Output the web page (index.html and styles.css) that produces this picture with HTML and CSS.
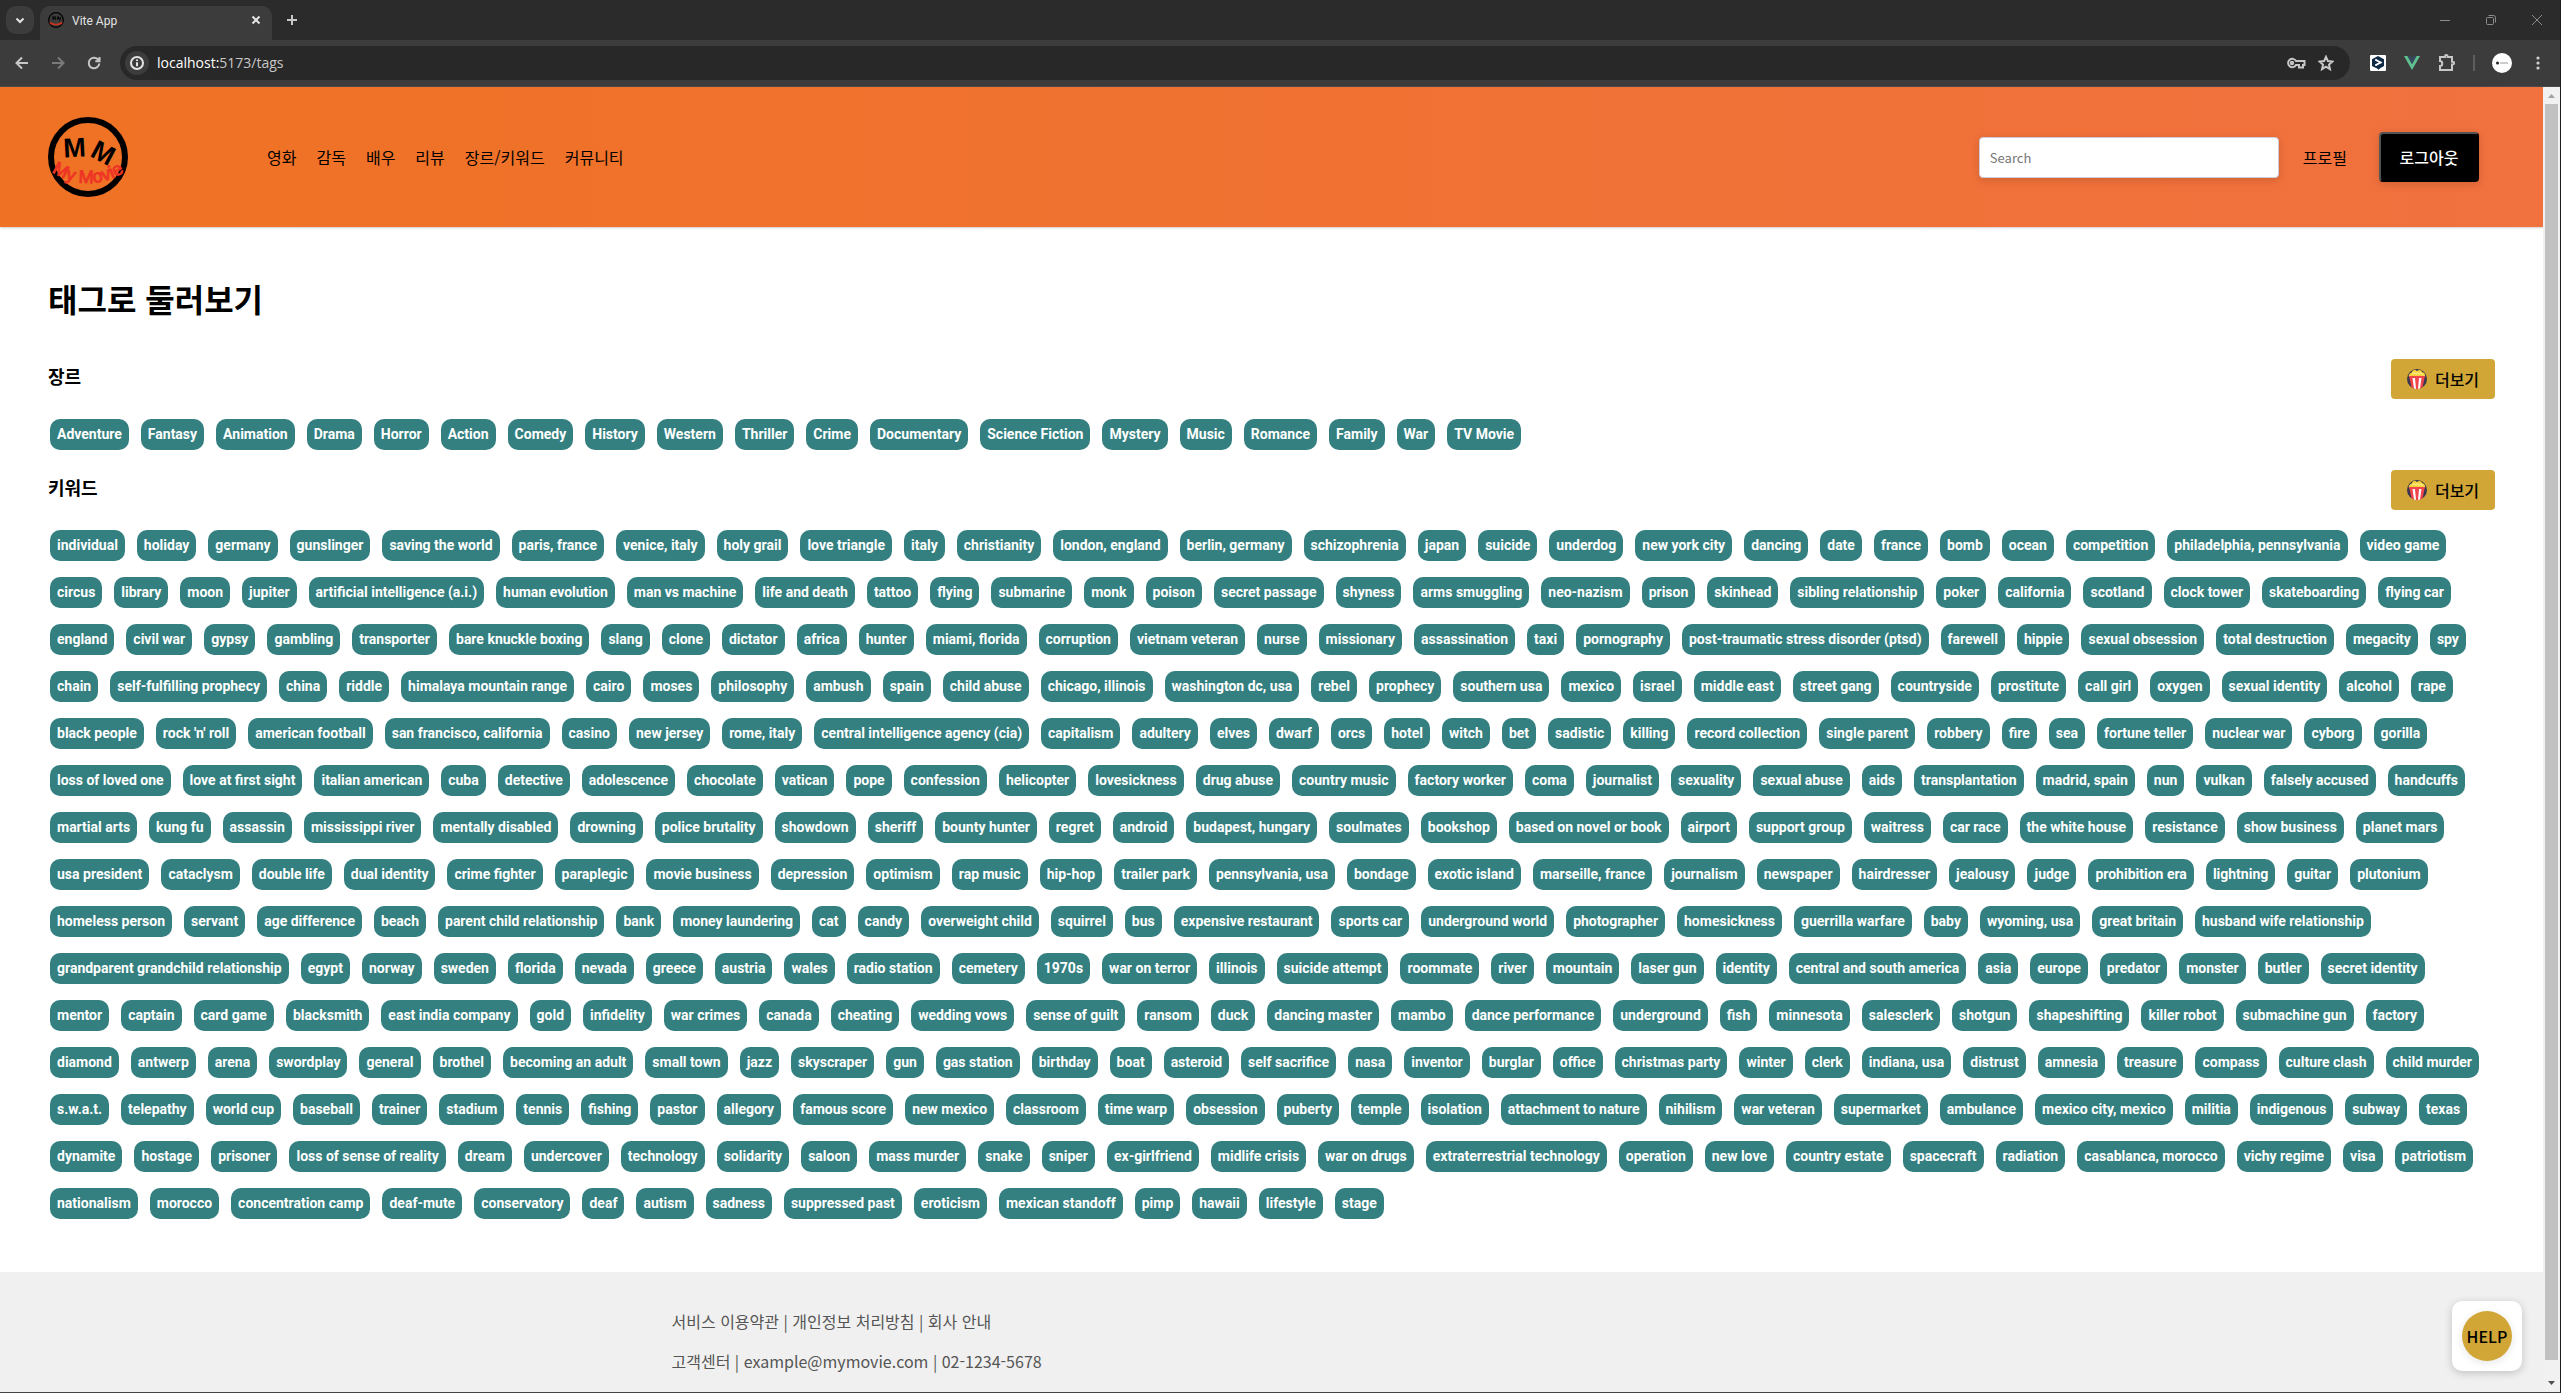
FILE: index.html
```html
<!DOCTYPE html>
<html lang="ko">
<head>
  <meta charset="utf-8">
  <title>Vite App</title>
  <link rel="stylesheet" href="styles.css">
</head>
<body>
  <div class="window">
    <div class="tab-strip">
      <button class="tab-menu" aria-label="Search tabs"><svg width="12" height="12" viewBox="0 0 12 12"><path d="M2.500 4.500L6 8l3.500-3.500"/></svg></button>
      <div class="tab">
        <svg class="favicon" width="16" height="16" viewBox="0 0 16 16">
          <circle cx="8" cy="8" r="7.300" fill="none" stroke="#000" stroke-width="1.300"/>
          <path d="M5 8V4.500l1 2 1.200-2V8M9 7.500l1.200-3 .500 2.500 1.800-1.500L11.500 9" fill="none" stroke="#000"/>
          <path d="M1.500 9.500q6.500 4.500 13 0l-.500 2.500q-6 2.500-12 0z" fill="#d3301f"/>
        </svg>
        <span class="tab-title">Vite App</span>
        <button class="icon-button" aria-label="Close tab"><svg width="10" height="10" viewBox="0 0 10 10"><path d="M1.500 1.500l7 7M8.500 1.500l-7 7"/></svg></button>
      </div>
      <button class="icon-button new-tab" aria-label="New tab"><svg width="12" height="12" viewBox="0 0 12 12"><path d="M6 1v10M1 6h10"/></svg></button>
      <div class="window-controls">
        <button class="icon-button" aria-label="Minimize"><svg width="12" height="12" viewBox="0 0 12 12"><path d="M1 6.500h10"/></svg></button>
        <button class="icon-button" aria-label="Restore"><svg width="12" height="12" viewBox="0 0 12 12"><rect x="1.500" y="3.500" width="7" height="7" rx="1"/><path d="M3.500 1.500h5a2 2 0 0 1 2 2v5"/></svg></button>
        <button class="icon-button" aria-label="Close"><svg width="12" height="12" viewBox="0 0 12 12"><path d="M1 1l10 10M11 1L1 11"/></svg></button>
      </div>
    </div>

    <div class="toolbar">
      <div class="toolbar-nav">
        <button class="icon-button" aria-label="Back"><svg width="16" height="16" viewBox="0 0 16 16"><path d="M14 8H3M8 2.500L2.500 8 8 13.500"/></svg></button>
        <button class="icon-button dim" aria-label="Forward"><svg width="16" height="16" viewBox="0 0 16 16"><path d="M2 8h11M8 2.500L13.500 8 8 13.500"/></svg></button>
        <button class="icon-button" aria-label="Reload"><svg width="16" height="16" viewBox="0 0 16 16"><path d="M13.300 8.500A5.300 5.300 0 1 1 11.800 4.300L13.500 6M13.500 2v4.200H9.300"/></svg></button>
      </div>
      <div class="address">
        <button class="icon-button site-info" aria-label="Site information"><svg width="16" height="16" viewBox="0 0 16 16"><circle cx="8" cy="8" r="6"/><path d="M8 7.200v4M8 4.500v1.500"/></svg></button>
        <span class="url"><span class="host">localhost:</span>5173/tags</span>
        <button class="icon-button" aria-label="Passwords"><svg width="20" height="16" viewBox="0 0 20 16"><path d="M10 6a4.200 4.200 0 1 0 0 4h3v2.500h4V10h1.500V6z"/><circle cx="6" cy="8" r="1.200"/></svg></button>
        <button class="icon-button" aria-label="Bookmark"><svg width="16" height="16" viewBox="0 0 16 16"><path d="M8 1.800l1.900 4.300 4.600.400-3.500 3.100 1 4.600-4-2.500-4 2.500 1-4.600L1.500 6.500l4.600-.400z"/></svg></button>
      </div>
      <div class="extensions">
        <button class="icon-button" aria-label="Translate"><svg width="16" height="16" viewBox="0 0 16 16"><rect class="solid" width="16" height="16" rx="1" fill="#fff"/><path class="solid" d="M8 1l6 3.200v6.800l-3.500 2L8 15v-1L2 11V4.200z" fill="#0f2b46"/><path d="M6 5l4.500 2.500L6 10" stroke="#fff"/><g class="solid" fill="#fff"><circle cx="6" cy="5" r="1"/><circle cx="10.500" cy="7.500" r="1"/><circle cx="6" cy="10" r="1"/></g></svg></button>
        <button class="icon-button" aria-label="Vue"><svg width="16" height="16" viewBox="0 0 16 16"><path class="solid" d="M0 1h3.500L8 9l4.500-8H16L8 15z" fill="#5fbf8f"/><path class="solid" d="M3.500 1h3L8 3.500 9.500 1h3L8 9z" fill="#35495e"/></svg></button>
        <button class="icon-button" aria-label="Extensions"><svg width="18" height="18" viewBox="0 0 18 18"><path d="M2 3h5v-.700a1.300 1.300 0 0 1 2.600 0V3H14v4.800h.800a1.300 1.300 0 0 1 0 2.600H14V16H2v-4c3 0 3-5 0-5z"/></svg></button>
        <span class="divider"></span>
        <button class="icon-button" aria-label="Profile"><svg width="20" height="20" viewBox="0 0 20 20"><circle class="solid" cx="10" cy="10" r="10" fill="#fff"/><circle class="solid" cx="5.500" cy="10" r="1.500" fill="#222"/><path class="thin" d="M8 10h8" stroke="#999"/></svg></button>
        <button class="icon-button" aria-label="Menu"><svg width="16" height="16" viewBox="0 0 16 16"><g class="solid" fill="#d0d0d0"><circle cx="8" cy="3" r="1.600"/><circle cx="8" cy="8" r="1.600"/><circle cx="8" cy="13" r="1.600"/></g></svg></button>
      </div>
    </div>

    <div class="viewport">
      <div class="page">
        <header class="site-header">
          <a class="logo" href="#" aria-label="My Movie">
            <svg width="80" height="80" viewBox="0 0 80 80">
              <circle cx="40" cy="40" r="37" fill="none" stroke="#000" stroke-width="6"/>
              <text class="logo-letter" transform="translate(27 40) rotate(-3)">M</text>
              <text class="logo-letter" transform="translate(51 44) rotate(28)">M</text>
              <path id="logo-arc" d="M0 52A64 64 0 0 0 80 52" fill="none"/>
              <text class="logo-name"><textPath href="#logo-arc" startOffset="50%">My Movie</textPath></text>
            </svg>
          </a>
          <nav class="site-nav">
            <a href="#">영화</a>
            <a href="#">감독</a>
            <a href="#">배우</a>
            <a href="#">리뷰</a>
            <a href="#">장르/키워드</a>
            <a href="#">커뮤니티</a>
          </nav>
          <input class="search" type="search" placeholder="Search" aria-label="Search">
          <a class="profile" href="#">프로필</a>
          <button class="logout">로그아웃</button>
        </header>

        <main class="content">
          <h1>태그로 둘러보기</h1>
          <section>
            <div class="section-head">
              <h2>장르</h2>
              <button class="more">
                <svg width="20" height="20" viewBox="0 0 20 20">
                  <circle cx="10" cy="10" r="10" fill="#35364f"/>
                  <path d="M2 8C1 5 4 4 5 3c1-3 4-2 5-1 2-2 5-1 5 1 2 0 4 3 3 5z" fill="#f6d13b"/>
                  <path d="M5 5q2-2 4 0 2-2 3 0 2-2 4 1" fill="none" stroke="#fdea7a" stroke-width="1.500"/>
                  <path d="M2 7h16l-2.500 11.300a10 10 0 0 1-11 0z" fill="#f0454b"/>
                  <path d="M5.500 9H8l1 11-2-.500zM12 9h2.500L13 19.500l-2 .500z" fill="#fff"/>
                </svg>
                더보기
              </button>
            </div>
            <ul class="tags" id="genres"></ul>
          </section>
          <section>
            <div class="section-head">
              <h2>키워드</h2>
              <button class="more">
                <svg width="20" height="20" viewBox="0 0 20 20">
                  <circle cx="10" cy="10" r="10" fill="#35364f"/>
                  <path d="M2 8C1 5 4 4 5 3c1-3 4-2 5-1 2-2 5-1 5 1 2 0 4 3 3 5z" fill="#f6d13b"/>
                  <path d="M5 5q2-2 4 0 2-2 3 0 2-2 4 1" fill="none" stroke="#fdea7a" stroke-width="1.500"/>
                  <path d="M2 7h16l-2.500 11.300a10 10 0 0 1-11 0z" fill="#f0454b"/>
                  <path d="M5.500 9H8l1 11-2-.500zM12 9h2.500L13 19.500l-2 .500z" fill="#fff"/>
                </svg>
                더보기
              </button>
            </div>
            <ul class="tags" id="keywords"></ul>
          </section>
        </main>

        <footer class="site-footer">
          <div class="footer-inner">
            <p>서비스 이용약관 | 개인정보 처리방침 | 회사 안내</p>
            <p>고객센터 | example@mymovie.com | 02-1234-5678</p>
          </div>
        </footer>

        <div class="help"><button>HELP</button></div>
      </div>
      <div class="scrollbar" aria-hidden="true">
        <svg class="arrow" width="17" height="17"><path d="M5 11h7L8.500 7z" fill="#a3a3a3"/></svg>
        <div class="thumb"></div>
        <svg class="arrow" width="17" height="17"><path d="M5 6h7L8.500 10z" fill="#505050"/></svg>
      </div>
    </div>
  </div>
  <script src="tags.js"></script>
</body>
</html>
```
FILE: styles.css
```css
* {
  box-sizing: border-box;
}

body {
  margin: 0;
  background: #fff;
  color: #000;
  font: 16px/24px "Noto Sans CJK KR", sans-serif;
}

button,
input {
  font: inherit;
}

button {
  padding: 0;
  border: 0;
  background: none;
  color: inherit;
}

a {
  color: inherit;
  text-decoration: none;
}

/* Browser frame */
.window {
  display: flex;
  flex-direction: column;
  height: 100vh;
  overflow: hidden;
  background: #3c3c3c;
  border-right: 1px solid #1c1c1c;
  border-bottom: 1px solid #444;
}

.tab-strip {
  display: flex;
  align-items: center;
  flex: none;
  height: 40px;
  padding: 0 6px;
  background: #2b2b2b;
  color: #e3e3e3;
}

.tab-strip svg,
.toolbar svg {
  display: block;
  fill: none;
  stroke: currentColor;
  stroke-width: 2px;
}

.tab-strip svg.favicon {
  stroke: none;
  stroke-width: 1px;
}

.toolbar svg .solid {
  stroke: none;
}

.toolbar svg .thin {
  stroke-width: 1px;
}

.icon-button,
.tab-menu {
  display: grid;
  place-items: center;
}

.tab-menu {
  width: 28px;
  height: 28px;
  border-radius: 10px;
  background: #3c3c3c;
}

.tab {
  display: flex;
  align-items: center;
  align-self: flex-end;
  width: 232px;
  height: 34px;
  margin-left: 6px;
  padding: 0 11px 6px 8px;
  border-radius: 10px 10px 0 0;
  background: #3c3c3c;
  font: 12px/16px Roboto, sans-serif;
}

.tab-title {
  flex: 1;
  margin: 2px 0 0 8px;
}

.new-tab {
  margin-left: 14px;
  color: #c7c7c7;
}

.window-controls {
  display: flex;
  gap: 34px;
  margin-left: auto;
  margin-right: 11px;
  color: #8c8c8c;
}

.tab-strip .window-controls svg {
  stroke-width: 1px;
}

.toolbar {
  display: flex;
  align-items: center;
  flex: none;
  height: 47px;
  padding: 0 14px;
  border-bottom: 1px solid #4a4a4a;
  background: #3c3c3c;
  color: #c7c7c7;
}

.toolbar-nav {
  display: flex;
  gap: 20px;
}

.toolbar .dim {
  color: #7a7a7a;
}

.address {
  display: flex;
  align-items: center;
  flex: 1;
  gap: 12px;
  height: 34px;
  margin-left: 18px;
  padding: 0 16px 0 5px;
  border-radius: 17px;
  background: #282828;
}

.site-info {
  width: 24px;
  height: 24px;
  border-radius: 50%;
  background: #3c3c3c;
  color: #e3e3e3;
}

.url {
  flex: 1;
  margin-left: -4px;
  color: #c7c7c7;
  font: 14px/20px "Open Sans", sans-serif;
}

.host {
  color: #fff;
}

.toolbar .address svg,
.toolbar .extensions svg {
  stroke-width: 2px;
}

.extensions {
  display: flex;
  align-items: center;
  gap: 18px;
  margin-left: 20px;
}

.divider {
  width: 2px;
  height: 16px;
  margin: 0 -1px;
  background: #5e5e5e;
}

.viewport {
  display: flex;
  flex: 1;
  min-height: 0;
}

.page {
  position: relative;
  display: flex;
  flex: 1;
  flex-direction: column;
  min-width: 0;
  overflow: hidden;
  background: #fff;
}

.scrollbar {
  display: flex;
  flex-direction: column;
  align-items: center;
  width: 17px;
  background: #f1f1f1;
}

.arrow {
  flex: none;
}

.thumb {
  flex: 1;
  width: 13px;
  margin-bottom: 15px;
  background: #c1c1c1;
}

/* Site header */
.site-header {
  display: flex;
  align-items: center;
  flex: none;
  height: 140px;
  padding: 0 64px 0 48px;
  background: linear-gradient(90deg, #ef7224, #f1713f);
  box-shadow: 0 1px 2px rgba(0, 0, 0, 0.2);
}

.logo svg {
  display: block;
  overflow: visible;
}

.logo-letter {
  font: bold 27px "Liberation Sans Narrow", "Liberation Sans", sans-serif;
  text-anchor: middle;
}

.logo-name {
  font: 18px "Liberation Sans", sans-serif;
  text-anchor: middle;
  fill: #ee3524;
  stroke: #ee3524;
  stroke-width: 1px;
}

.site-nav {
  display: flex;
  flex: 1;
  gap: 20px;
  margin-left: 139px;
}

.search {
  width: 300px;
  height: 41px;
  padding: 0 10px;
  border: 1px solid #ccd;
  border-radius: 4px;
  background: #fff;
  box-shadow: 0 2px 8px rgba(0, 0, 0, 0.15);
  font-size: 13px;
}

.search::placeholder {
  color: #757575;
}

.profile {
  margin: 0 32px 0 24px;
}

.logout {
  width: 100px;
  height: 50px;
  border: 2px outset #000;
  border-radius: 4px;
  background: #000;
  box-shadow: 0 2px 8px rgba(0, 0, 0, 0.15);
  color: #fff;
  font-weight: 500;
}

/* Tags */
.content {
  padding: 46px 48px 33px;
}

h1,
h2 {
  margin: 0;
}

h1 {
  margin-bottom: 36px;
  font-size: 32px;
  line-height: 50px;
}

.section-head {
  display: flex;
  align-items: flex-start;
  justify-content: space-between;
}

h2 {
  font-size: 18px;
  line-height: 34px;
}

.more {
  display: flex;
  align-items: center;
  justify-content: center;
  gap: 8px;
  width: 104px;
  height: 40px;
  border-radius: 4px;
  background: #d1a636;
  font-weight: 500;
}

.tags {
  display: flex;
  flex-wrap: wrap;
  gap: 16px 12px;
  margin: 0;
  padding: 20px 0 20px 2px;
  list-style: none;
}

.tags a {
  display: block;
  padding: 0 7px;
  border-radius: 10px;
  background: #347f80;
  color: #fff;
  font: bold 14px/31px Roboto, sans-serif;
}

/* Footer */
.site-footer {
  flex: 1;
  padding: 37px 0 16px;
  background: #f0f0f0;
  color: #555;
}

.footer-inner {
  max-width: 1200px;
  margin: 0 auto;
}

.footer-inner p {
  margin: 0 0 16px;
}

.help {
  position: absolute;
  right: 21px;
  bottom: 21px;
  padding: 10px;
  border-radius: 10px;
  background: #fff;
  box-shadow: 0 2px 8px rgba(0, 0, 0, 0.2);
}

.help button {
  display: block;
  width: 50px;
  height: 50px;
  border-radius: 50%;
  background: #d1a636;
  box-shadow: 0 2px 8px rgba(0, 0, 0, 0.1);
  font-weight: 500;
}
```
FILE: tags.js
```js
const genres = `Adventure|Fantasy|Animation|Drama|Horror|Action|Comedy|History|Western|Thriller|Crime|Documentary|Science Fiction|Mystery|Music|Romance|Family|War|TV Movie`;

const keywords = [
  `individual|holiday|germany|gunslinger|saving the world|paris, france|venice, italy|holy grail|love triangle|italy|christianity|london, england|berlin, germany|schizophrenia|japan|suicide|underdog|new york city|dancing|date|france|bomb|ocean|competition|philadelphia, pennsylvania|video game`,
  `circus|library|moon|jupiter|artificial intelligence (a.i.)|human evolution|man vs machine|life and death|tattoo|flying|submarine|monk|poison|secret passage|shyness|arms smuggling|neo-nazism|prison|skinhead|sibling relationship|poker|california|scotland|clock tower|skateboarding|flying car`,
  `england|civil war|gypsy|gambling|transporter|bare knuckle boxing|slang|clone|dictator|africa|hunter|miami, florida|corruption|vietnam veteran|nurse|missionary|assassination|taxi|pornography|post-traumatic stress disorder (ptsd)|farewell|hippie|sexual obsession|total destruction|megacity|spy`,
  `chain|self-fulfilling prophecy|china|riddle|himalaya mountain range|cairo|moses|philosophy|ambush|spain|child abuse|chicago, illinois|washington dc, usa|rebel|prophecy|southern usa|mexico|israel|middle east|street gang|countryside|prostitute|call girl|oxygen|sexual identity|alcohol|rape`,
  `black people|rock 'n' roll|american football|san francisco, california|casino|new jersey|rome, italy|central intelligence agency (cia)|capitalism|adultery|elves|dwarf|orcs|hotel|witch|bet|sadistic|killing|record collection|single parent|robbery|fire|sea|fortune teller|nuclear war|cyborg|gorilla`,
  `loss of loved one|love at first sight|italian american|cuba|detective|adolescence|chocolate|vatican|pope|confession|helicopter|lovesickness|drug abuse|country music|factory worker|coma|journalist|sexuality|sexual abuse|aids|transplantation|madrid, spain|nun|vulkan|falsely accused|handcuffs`,
  `martial arts|kung fu|assassin|mississippi river|mentally disabled|drowning|police brutality|showdown|sheriff|bounty hunter|regret|android|budapest, hungary|soulmates|bookshop|based on novel or book|airport|support group|waitress|car race|the white house|resistance|show business|planet mars`,
  `usa president|cataclysm|double life|dual identity|crime fighter|paraplegic|movie business|depression|optimism|rap music|hip-hop|trailer park|pennsylvania, usa|bondage|exotic island|marseille, france|journalism|newspaper|hairdresser|jealousy|judge|prohibition era|lightning|guitar|plutonium`,
  `homeless person|servant|age difference|beach|parent child relationship|bank|money laundering|cat|candy|overweight child|squirrel|bus|expensive restaurant|sports car|underground world|photographer|homesickness|guerrilla warfare|baby|wyoming, usa|great britain|husband wife relationship`,
  `grandparent grandchild relationship|egypt|norway|sweden|florida|nevada|greece|austria|wales|radio station|cemetery|1970s|war on terror|illinois|suicide attempt|roommate|river|mountain|laser gun|identity|central and south america|asia|europe|predator|monster|butler|secret identity`,
  `mentor|captain|card game|blacksmith|east india company|gold|infidelity|war crimes|canada|cheating|wedding vows|sense of guilt|ransom|duck|dancing master|mambo|dance performance|underground|fish|minnesota|salesclerk|shotgun|shapeshifting|killer robot|submachine gun|factory`,
  `diamond|antwerp|arena|swordplay|general|brothel|becoming an adult|small town|jazz|skyscraper|gun|gas station|birthday|boat|asteroid|self sacrifice|nasa|inventor|burglar|office|christmas party|winter|clerk|indiana, usa|distrust|amnesia|treasure|compass|culture clash|child murder`,
  `s.w.a.t.|telepathy|world cup|baseball|trainer|stadium|tennis|fishing|pastor|allegory|famous score|new mexico|classroom|time warp|obsession|puberty|temple|isolation|attachment to nature|nihilism|war veteran|supermarket|ambulance|mexico city, mexico|militia|indigenous|subway|texas`,
  `dynamite|hostage|prisoner|loss of sense of reality|dream|undercover|technology|solidarity|saloon|mass murder|snake|sniper|ex-girlfriend|midlife crisis|war on drugs|extraterrestrial technology|operation|new love|country estate|spacecraft|radiation|casablanca, morocco|vichy regime|visa|patriotism`,
  `nationalism|morocco|concentration camp|deaf-mute|conservatory|deaf|autism|sadness|suppressed past|eroticism|mexican standoff|pimp|hawaii|lifestyle|stage`,
].join('|');

function renderTags(listId, names) {
  const list = document.getElementById(listId);
  for (const name of names.split('|')) {
    const link = document.createElement('a');
    link.href = '#';
    link.textContent = name;
    const item = document.createElement('li');
    item.append(link);
    list.append(item);
  }
}

renderTags('genres', genres);
renderTags('keywords', keywords);
```
